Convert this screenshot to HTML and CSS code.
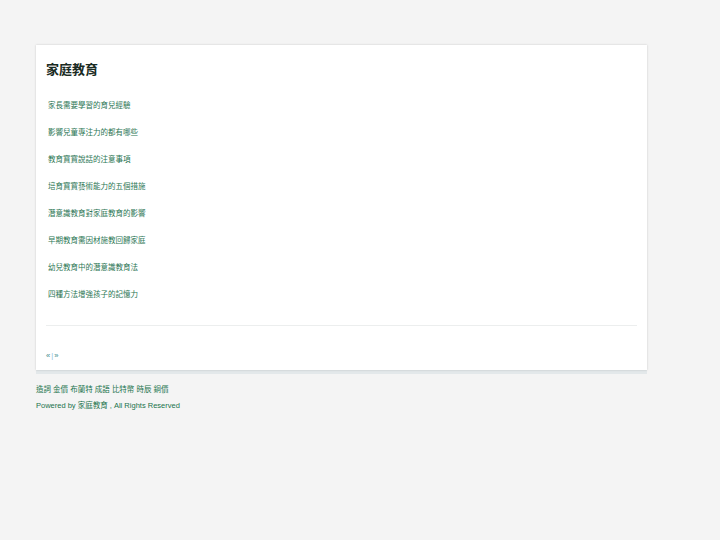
FILE: index.html
```html
<!DOCTYPE html>
<html>
<head>
<meta charset="utf-8" />
<title>家庭教育</title>
<link rel="stylesheet" href="styles.css">
</head>
<body>
<div id="wrap">
	<div class="card">
		<h1 class="title">家庭教育</h1>
		<ul class="list">
			<li><a href="javascript:;">家長需要學習的育兒經驗</a></li>
			<li><a href="javascript:;">影響兒童專注力的都有哪些</a></li>
			<li><a href="javascript:;">教育寶寶說話的注意事項</a></li>
			<li><a href="javascript:;">培育寶寶藝術能力的五個措施</a></li>
			<li><a href="javascript:;">潛意識教育對家庭教育的影響</a></li>
			<li><a href="javascript:;">早期教育需因材施教回歸家庭</a></li>
			<li><a href="javascript:;">幼兒教育中的潛意識教育法</a></li>
			<li><a href="javascript:;">四種方法增強孩子的記憶力</a></li>
		</ul>
		<div class="line"></div>
		<div class="pager"><a href="javascript:;">«</a><span class="sep">|</span><a href="javascript:;">»</a></div>
	</div>
	<div class="foot">
		<p class="links"><a href="javascript:;">造詞</a> <a href="javascript:;">金價</a> <a href="javascript:;">布蘭特</a> <a href="javascript:;">成語</a> <a href="javascript:;">比特幣</a> <a href="javascript:;">時辰</a> <a href="javascript:;">銅價</a></p>
		<p class="copy">Powered by <a href="javascript:;">家庭教育</a> , All Rights Reserved</p>
	</div>
</div>
</body>
</html>
```

FILE: styles.css
```css
* {padding:0;margin:0;}
body {background:#f4f4f4;font-family:"Liberation Sans","Noto Sans CJK TC",sans-serif;}
a {text-decoration:none;color:#1f7a52;}
#wrap {width:611px;margin-left:36px;padding-top:45px;}
/*主框*/
.card {background:#fff;padding:17px 10px 8px;box-shadow:0 0 2px rgba(0,0,0,0.18),0 4px 0 #e3e8ea;}
.title {font-size:13px;line-height:16px;font-weight:bold;color:#1a2b23;}
.list {list-style:none;margin-top:14px;padding-left:2px;}
.list li {height:27px;line-height:27px;font-size:7.5px;}
.list li a {color:#2a7553;}
.line {height:1px;background:#eceeee;margin-top:17px;}
.pager {margin-top:24px;height:12px;line-height:12px;font-size:7.5px;}
.pager a {color:#3b8a8a;}
.pager .sep {color:#8fc3e0;margin:0 1px;}
/*底部*/
.foot {margin-top:12px;font-size:7.5px;line-height:16px;}
.foot a {color:#1a734c;}
.copy {color:#1a734c;}
```
